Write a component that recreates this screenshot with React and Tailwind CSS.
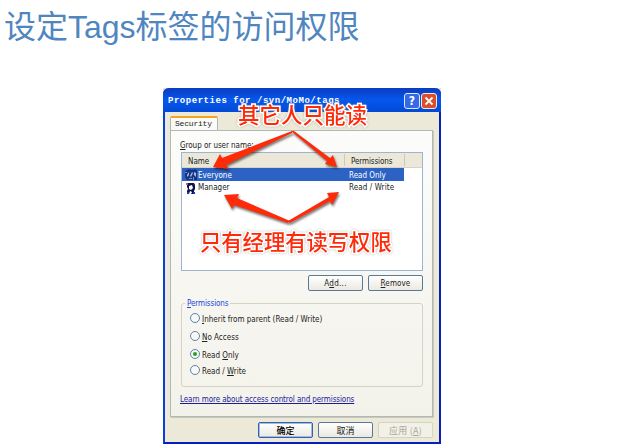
const ui = 'font-["DejaVu_Sans_Condensed","DejaVu_Sans","Noto_Sans_CJK_SC",sans-serif]';

function U({ children }) {
  return <span className="underline decoration-1 underline-offset-1">{children}</span>;
}

function PushButton({ children, tone = "normal" }) {
  const tones = {
    normal: "border-[#58789c] bg-linear-to-b from-white to-[#ebe9e0] text-[#222]",
    primary: "border-[#3a62a0] bg-linear-to-b from-white to-[#ebe9e0] text-black shadow-[inset_0_0_0_1px_#9dbcf0]",
    disabled: "border-[#d6d3c3] bg-[#f2f1e8] text-[#aaa89a]",
  };
  return (
    <button className={`flex h-4 w-[55px] shrink-0 items-center justify-center rounded-[2px] border leading-none ${tones[tone]}`}>
      {children}
    </button>
  );
}

function Radio({ checked, children, className }) {
  return (
    <div className={`flex h-3 items-center gap-[2px] ${className}`}>
      <span className="flex size-[10px] shrink-0 items-center justify-center rounded-full border border-[#5d83aa] bg-[#f7f8f7]">
        {checked && <span className="size-1 rounded-full bg-[#22a622]" />}
      </span>
      <span className="pt-[2px] leading-[9px] whitespace-nowrap">{children}</span>
    </div>
  );
}

function UserIcon({ group }) {
  return (
    <svg className="-ml-px mr-px block h-[12px] w-[12px] shrink-0" viewBox="0 0 12 12">
      {group ? (
        <>
          <path d="M0 2l4-2 3 1 4-1 1 2v9H2L0 8z" fill="#17357f" />
          <path d="M2 6l2-3v3L2 8zM5 7l2-4 1 1-2 4zM9 3l2 1v4L9 6z" fill="#a5bdec" />
          <path d="M0 3h2v1H0zM4 9h3v1H4zM8 8h1v3H8z" fill="#6f8fd8" />
        </>
      ) : (
        <>
          <path d="M2 1h7l1 2v4L9 9v3H2V9l1-2-1-2z" fill="#0a1250" />
          <path d="M4 4l3-1 1 3-2 2-2-1zM5 9l2 1-1 2H4z" fill="#fff" />
          <path d="M1 1h2v2H1z" fill="#e05050" />
          <path d="M2 10h2v2H2zM8 10h2v2H8z" fill="#1c34b8" />
        </>
      )}
    </svg>
  );
}

function Notes() {
  const note =
    'absolute whitespace-nowrap font-["Noto_Sans_CJK_SC",sans-serif] font-medium leading-[24px] text-[#ff2908] [paint-order:stroke_fill] [-webkit-text-stroke:3px_white] [filter:drop-shadow(0_0_1px_#8888)]';
  return (
    <>
      <svg className="pointer-events-none absolute inset-0 [filter:drop-shadow(1px_2px_1px_#0008)]" width="640" height="445" viewBox="0 0 640 445">
        <g fill="#ff2a08">
          <path d="M292 131L222 158 220 154 213 167 229 169 226 165 292 133z" />
          <path d="M291 131L327 161 325 164 337 167 333 155 330 158 294 131z" />
          <path d="M288 223L234 205 232 209 224 195 239 194 237 198 290 221z" />
          <path d="M288 221L329 197 327 193 339 192 332 205 330 201 290 223z" />
        </g>
      </svg>
      <div className={`${note} left-[238px] top-[102px] text-[21.5px]`}>其它人只能读</div>
      <div className={`${note} left-[200px] top-[229px] text-[21.3px]`}>只有经理有读写权限</div>
    </>
  );
}

export default function App() {
  return (
    <main className="relative h-[445px] w-[640px] overflow-hidden bg-white">
      <h1 className='h-[88px] pl-[4px] pt-[7px] font-["Liberation_Sans","Noto_Sans_CJK_SC",sans-serif] text-[32px] font-normal leading-[40px] text-[#4f86c0]'>
        设定Tags标签的访问权限
      </h1>
      <div className="ml-[163px] h-[356px] w-[278px] bg-[#e6e2d0]">
        <section className={`flex h-[356px] w-[278px] flex-col rounded-t-[6px] border-x-2 border-b-2 border-[#0a3fdf] border-r-[#0620b8] border-b-[#0620c0] bg-[#ece9d8] text-[8px] text-[#222] ${ui}`}>
          <header className="-mx-[2px] flex h-6 shrink-0 items-center rounded-t-[6px] bg-linear-to-b from-[#0a3bc0] via-[#0558ee] to-[#0349d4] pl-[5px] pr-[4px] pt-[2px]">
            <span className='flex-1 whitespace-nowrap pt-px font-["Liberation_Mono",monospace] text-[9px] font-bold tracking-[0.53px] text-white'>
              Properties for /svn/MoMo/tags
            </span>
            <span className="mr-px flex size-4 items-center justify-center rounded-[3px] border border-[#dfe8fb] bg-[#3569e5] text-[12px] font-bold text-white">?</span>
            <span className="flex size-4 items-center justify-center rounded-[3px] border border-[#f4e3e0] bg-[#dc4f2a]">
              <svg width="10" height="10" viewBox="0 0 10 10"><path d="M1.5 1.5l7 7M8.5 1.5l-7 7" stroke="#fff" strokeWidth="1.8" /></svg>
            </span>
          </header>
          <div className="ml-[5px] mt-[4px] flex h-[14px] w-[48px] shrink-0 items-center rounded-t-[2px] border-x border-t-2 border-[#aeb5b3] border-t-[#f5a51d] bg-[#fafaf8] pl-[4px] font-['Liberation_Mono',monospace] text-[8px] tracking-[-0.2px]">
            Security
          </div>
          <div className="ml-[5px] flex h-[287px] w-[263px] shrink-0 flex-col border border-[#b0b8b8] bg-linear-to-b from-[#fcfcfb] to-[#f3f2ea] pl-[10px] pt-[9px] shadow-[1px_1px_0_#cac8b9]">
            <div className="-ml-px h-3 pt-px leading-[10px] tracking-[-0.05px]"><U>G</U>roup or user name:</div>
            <div className="h-[119px] w-[242px] shrink-0 border border-[#9db5cd] bg-white">
              <div className="flex h-[15px] border-b border-[#d7d3c2] bg-[#ebe8da]">
                <span className="my-px w-[163px] border-r border-[#cdc9b9] pl-[6px] leading-[15px]">Name</span>
                <span className="my-px w-[60px] border-r border-[#cdc9b9] pl-[6px] leading-[15px] tracking-[-0.1px]">Permissions</span>
              </div>
              <div className="flex h-[13px] w-[222px] items-center bg-[#2b62c4] pl-[4px] text-white">
                <UserIcon group /><span className="w-[151px] pt-[2px]">Everyone</span><span className="whitespace-nowrap pt-[2px]">Read Only</span>
              </div>
              <div className="flex h-[13px] w-[222px] items-center pl-[4px]">
                <UserIcon /><span className="w-[151px] pt-px">Manager</span><span className="whitespace-nowrap pt-px tracking-[0.1px]">Read / Write</span>
              </div>
            </div>
            <div className="mt-[4px] flex w-[242px] justify-end gap-[5px]">
              <PushButton><span className="pt-px leading-[8px] tracking-[0.3px]">A<U>d</U>d...</span></PushButton>
              <PushButton><span className="pt-px leading-[8px] tracking-[0.1px]"><U>R</U>emove</span></PushButton>
            </div>
            <div className="mt-[12px] h-[84px] w-[242px] shrink-0 rounded-[3px] border border-[#d5d3c2] pl-[8px]">
              <div className="-ml-[5px] -mt-[5px] h-[9px] w-max bg-[#f6f6f1] px-[2px] leading-[10px] tracking-[-0.1px] text-[#2149d6]"><U>P</U>ermissions</div>
              <Radio className="mt-[4px]"><U>I</U>nherit from parent (Read / Write)</Radio>
              <Radio className="mt-[6px]"><U>N</U>o Access</Radio>
              <Radio className="mt-[6px]" checked>Read <U>O</U>nly</Radio>
              <Radio className="mt-[4px]">Read / <U>W</U>rite</Radio>
            </div>
            <a className="-ml-px mt-[6px] w-max pt-px tracking-[-0.1px] text-[#1c1c9c] underline underline-offset-1">Learn more about access control and permissions</a>
          </div>
          <div className='flex justify-end gap-[5px] pr-[6px] pt-[5px] font-["Noto_Sans_CJK_SC",sans-serif] text-[9px]'>
            <PushButton tone="primary"><span className="font-medium">确定</span></PushButton>
            <PushButton>取消</PushButton>
            <PushButton tone="disabled"><span className="tracking-[0.2px]">应用 (<U>A</U>)</span></PushButton>
          </div>
        </section>
      </div>
      <Notes />
    </main>
  );
}
